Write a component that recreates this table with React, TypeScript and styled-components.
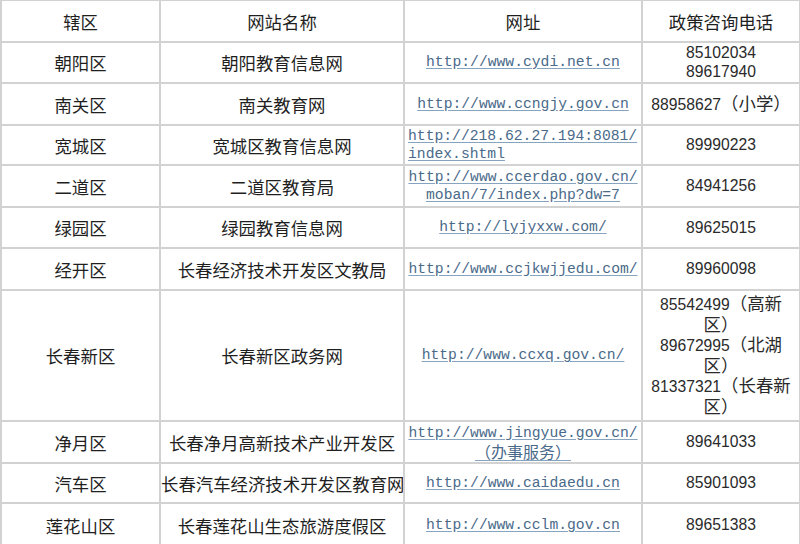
import React from "react";
import styled, { createGlobalStyle } from "styled-components";

const Global = createGlobalStyle`
  html, body { margin: 0; padding: 0; background: #ffffff; overflow: hidden; }
  body { font-family: "Noto Sans CJK SC", "Noto Sans", sans-serif; }
`;

const Page = styled.div`
  width: 800px;
  height: 544px;
  overflow: hidden;
  background: #fff;
`;

const Table = styled.table`
  width: 799px;
  margin-top: -1px;
  border-collapse: collapse;
  table-layout: fixed;
`;

const Row = styled.tr<{ $h: number }>`
  height: ${(p) => p.$h}px;
`;

const Cell = styled.td<{ $clip?: boolean }>`
  border: 2px solid #d2d2d2;
  padding: ${(p) => (p.$clip ? "0" : "0 2px")};
  text-align: center;
  vertical-align: middle;
  font-family: "Noto Sans CJK SC", sans-serif;
  font-size: 17.4px;
  line-height: 19px;
  color: #1f1f1f;
  white-space: nowrap;
  overflow: ${(p) => (p.$clip ? "hidden" : "visible")};
`;

const HeadCell = styled(Cell).attrs({ as: "th" })`
  font-weight: normal;
`;

const UrlCell = styled(Cell)`
  padding: 0 3px;
`;

const Link = styled.span<{ $align?: "left" | "center" }>`
  display: block;
  height: 18.5px;
  text-align: ${(p) => p.$align ?? "center"};
  font-family: "Liberation Mono", "Noto Sans CJK SC", monospace;
  font-size: 14.7px;
  line-height: 18.5px;
  color: #4a6a8a;
  text-decoration: underline;
  text-decoration-color: #86a3c0;
  text-underline-offset: 2px;
`;

const LinkCjk = styled.span`
  font-family: "Noto Sans CJK SC", sans-serif;
  font-size: 16px;
  line-height: 18.5px;
`;

const PhoneCell = styled(Cell)`
  font-family: "Liberation Sans", "Noto Sans CJK SC", sans-serif;
  font-size: 15.7px;
  color: #2a2a2a;
`;

const Line = styled.span<{ $h: number }>`
  display: block;
  height: ${(p) => p.$h}px;
  line-height: ${(p) => p.$h}px;
`;

const Wide = styled.span`
  font-family: "Noto Sans CJK SC", sans-serif;
  font-size: 17.4px;
  line-height: 1;
`;

type Url = { text: React.ReactNode; align?: "left" | "center" }[];

type Item = {
  h: number;
  district: string;
  name: string;
  clipName?: boolean;
  url: Url;
  phone: React.ReactNode[];
  lineH?: number;
};

const items: Item[] = [
  {
    h: 41,
    district: "朝阳区",
    name: "朝阳教育信息网",
    url: [{ text: "http://www.cydi.net.cn" }],
    lineH: 18.5,
    phone: ["85102034", "89617940"],
  },
  {
    h: 42,
    district: "南关区",
    name: "南关教育网",
    url: [{ text: "http://www.ccngjy.gov.cn" }],
    phone: [
      <>
        88958627<Wide>（小学）</Wide>
      </>,
    ],
  },
  {
    h: 40,
    district: "宽城区",
    name: "宽城区教育信息网",
    url: [
      { text: "http://218.62.27.194:8081/", align: "left" },
      { text: "index.shtml", align: "left" },
    ],
    phone: ["89990223"],
  },
  {
    h: 42,
    district: "二道区",
    name: "二道区教育局",
    url: [{ text: "http://www.ccerdao.gov.cn/" }, { text: "moban/7/index.php?dw=7" }],
    phone: ["84941256"],
  },
  {
    h: 41,
    district: "绿园区",
    name: "绿园教育信息网",
    url: [{ text: "http://lyjyxxw.com/" }],
    phone: ["89625015"],
  },
  {
    h: 42,
    district: "经开区",
    name: "长春经济技术开发区文教局",
    url: [{ text: "http://www.ccjkwjjedu.com/" }],
    phone: ["89960098"],
  },
  {
    h: 131,
    district: "长春新区",
    name: "长春新区政务网",
    url: [{ text: "http://www.ccxq.gov.cn/" }],
    lineH: 20.5,
    phone: [
      <>
        85542499<Wide>（高新</Wide>
      </>,
      <Wide>区）</Wide>,
      <>
        89672995<Wide>（北湖</Wide>
      </>,
      <Wide>区）</Wide>,
      <>
        81337321<Wide>（长春新</Wide>
      </>,
      <Wide>区）</Wide>,
    ],
  },
  {
    h: 42,
    district: "净月区",
    name: "长春净月高新技术产业开发区",
    url: [
      { text: "http://www.jingyue.gov.cn/" },
      { text: <LinkCjk>（办事服务）</LinkCjk> },
    ],
    phone: ["89641033"],
  },
  {
    h: 40,
    district: "汽车区",
    name: "长春汽车经济技术开发区教育网",
    clipName: true,
    url: [{ text: "http://www.caidaedu.cn" }],
    phone: ["85901093"],
  },
  {
    h: 44,
    district: "莲花山区",
    name: "长春莲花山生态旅游度假区",
    url: [{ text: "http://www.cclm.gov.cn" }],
    phone: ["89651383"],
  },
];

export default function App() {
  return (
    <Page>
      <Global />
      <Table>
        <colgroup>
          <col style={{ width: 159 }} />
          <col style={{ width: 244 }} />
          <col style={{ width: 238 }} />
          <col style={{ width: 158 }} />
        </colgroup>
        <thead>
          <Row $h={42}>
            <HeadCell>辖区</HeadCell>
            <HeadCell>网站名称</HeadCell>
            <HeadCell>网址</HeadCell>
            <HeadCell>政策咨询电话</HeadCell>
          </Row>
        </thead>
        <tbody>
          {items.map((it) => (
            <Row key={it.district} $h={it.h}>
              <Cell>{it.district}</Cell>
              <Cell $clip={it.clipName}>{it.name}</Cell>
              <UrlCell>
                {it.url.map((u, i) => (
                  <Link key={i} $align={u.align}>
                    {u.text}
                  </Link>
                ))}
              </UrlCell>
              <PhoneCell>
                {it.phone.map((p, i) => (
                  <Line key={i} $h={it.lineH ?? 20}>
                    {p}
                  </Line>
                ))}
              </PhoneCell>
            </Row>
          ))}
        </tbody>
      </Table>
    </Page>
  );
}
